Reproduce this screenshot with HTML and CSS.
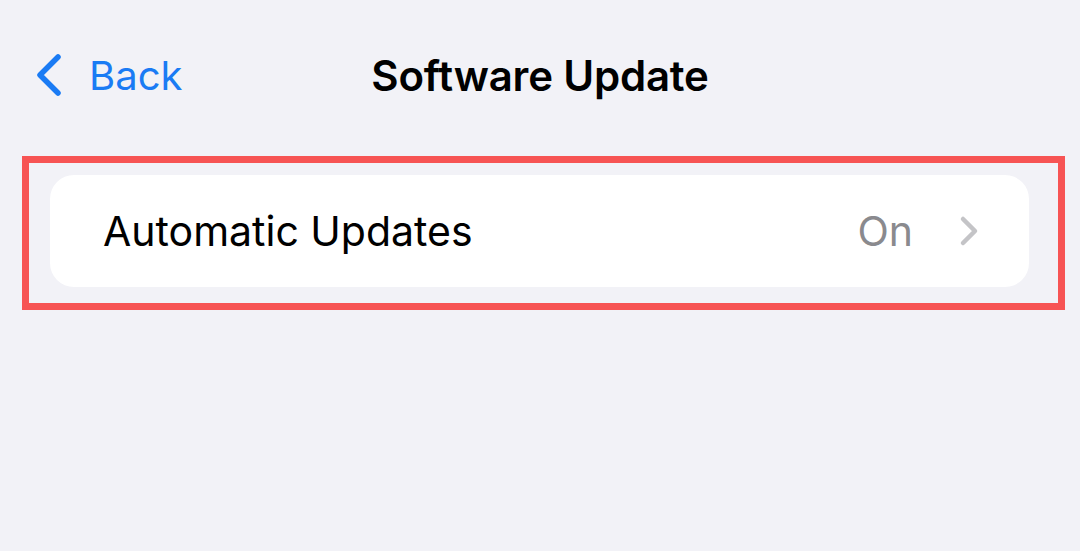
FILE: index.html
```html
<!DOCTYPE html>
<html>
<head>
<meta charset="utf-8">
<link rel="stylesheet" href="styles.css">
</head>
<body>
<header class="nav">
  <div class="nav-left">
    <a class="back">
      <svg class="back-icon" width="28" height="44" viewBox="0 0 28 44"><path d="M23 4 L5 22 L23 40" fill="none" stroke="#1a7bf4" stroke-width="5.5" stroke-linecap="round" stroke-linejoin="round"/></svg>
      <span class="back-label">Back</span>
    </a>
  </div>
  <h1 class="title">Software Update</h1>
  <div class="nav-right"></div>
</header>
<section class="highlight">
  <div class="card">
    <span class="row-label">Automatic Updates</span>
    <span class="row-value">On</span>
    <svg class="chev" width="20" height="32" viewBox="0 0 20 32"><path d="M4 4 L16 16 L4 28" fill="none" stroke="#c4c4c7" stroke-width="4.5" stroke-linecap="round" stroke-linejoin="round"/></svg>
  </div>
</section>
</body>
</html>
```
FILE: styles.css
```css
html, body {
  margin: 0;
  padding: 0;
  background: #f2f2f7;
  font-family: Inter, "Liberation Sans", sans-serif;
  color: #000;
}
body {
  width: 1080px;
  height: 551px;
  overflow: hidden;
}
.nav {
  height: 150px;
  display: grid;
  grid-template-columns: 1fr auto 1fr;
  align-items: center;
}
.nav-left {
  padding-left: 35px;
}
.back {
  display: flex;
  align-items: center;
  gap: 26px;
  color: #1a7bf4;
  font-size: 40px;
}
.back-icon {
  display: block;
}
.title {
  margin: 0;
  font-size: 42px;
  font-weight: 600;
  letter-spacing: -0.2px;
}
.highlight {
  margin: 6px 0 0 22px;
  border: 7px solid #f75454;
  padding: 12px 29px 16px 21px;
  box-sizing: content-box;
  width: 979px;
}
.card {
  background: #fff;
  border-radius: 24px;
  height: 112px;
  display: flex;
  align-items: center;
  padding: 0 50px 0 53px;
}
.row-label {
  flex: 1;
  font-size: 41px;
}
.row-value {
  font-size: 41px;
  color: #8a8a8e;
  margin-right: 46px;
}
.chev {
  display: block;
}
```
